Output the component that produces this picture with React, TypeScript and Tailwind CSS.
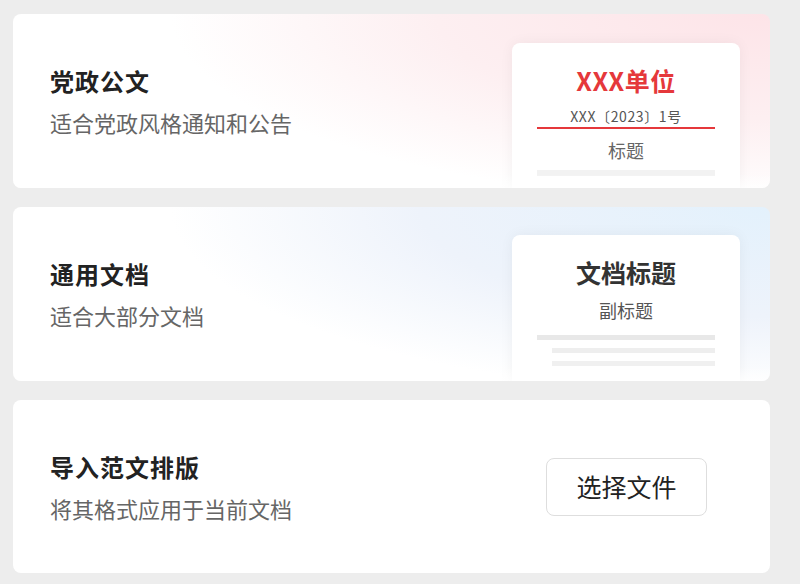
const font = { fontFamily: '"Noto Sans CJK SC", "Noto Sans", sans-serif' };

const Info = ({ title, desc }: { title: string; desc: string }) => (
  <div className="flex flex-col pl-[37px]">
    <p className="text-[24px] leading-[32px] font-bold tracking-[1px] text-[#222]">{title}</p>
    <p className="mt-[10px] text-[22px] leading-[30px] text-[#666]">{desc}</p>
  </div>
);

const App = () => {
  return (
    <div className="min-h-[584px] bg-[#ededed] pt-[14px] pl-[13px] pr-[30px]" style={font}>
      <div className="flex flex-col gap-[19px]">
        {/* 党政公文 */}
        <div className="relative h-[174px] overflow-hidden rounded-[8px] bg-[radial-gradient(110%_150%_at_100%_0%,#fde4e8_0%,#fdeff1_40%,#ffffff_72%)] flex items-center justify-between">
          <Info title="党政公文" desc="适合党政风格通知和公告" />
          <div className="self-start mt-[29px] mr-[30px] w-[228px] h-[170px] rounded-[8px] bg-white shadow-[0_0_14px_rgba(0,0,0,0.05)] flex flex-col items-center pt-[21px]">
            <p className="text-[25px] leading-[32px] font-bold tracking-[0.5px] text-[#e5383b]">XXX单位</p>
            <p className="mt-[11px] text-[14px] leading-[18px] tracking-[0.6px] text-[#555]">XXX〔2023〕1号</p>
            <div className="mt-[2px] h-[2px] w-[178px] bg-[#e5383b]" />
            <p className="mt-[10px] text-[18px] leading-[22px] text-[#666]">标题</p>
            <div className="mt-[9px] h-[6px] w-[178px] bg-[#f2f2f2]" />
          </div>
          <div className="absolute inset-x-0 bottom-0 h-[14px] bg-gradient-to-b from-transparent to-white/70" />
        </div>

        {/* 通用文档 */}
        <div className="relative h-[174px] overflow-hidden rounded-[8px] bg-[radial-gradient(110%_150%_at_100%_0%,#e3f1fc_0%,#eef3fb_42%,#ffffff_72%)] flex items-center justify-between">
          <Info title="通用文档" desc="适合大部分文档" />
          <div className="self-start mt-[28px] mr-[30px] w-[228px] h-[170px] rounded-[8px] bg-white shadow-[0_0_14px_rgba(0,0,0,0.05)] flex flex-col items-center pt-[21px]">
            <p className="text-[25px] leading-[32px] font-bold text-[#333]">文档标题</p>
            <p className="mt-[10px] text-[18px] leading-[24px] text-[#555]">副标题</p>
            <div className="mt-[13px] flex w-[178px] flex-col items-end">
              <div className="h-[5px] w-full bg-[#e8e8e8]" />
              <div className="mt-[8px] h-[5px] w-[163px] bg-[#eeeeee]" />
              <div className="mt-[8px] h-[5px] w-[163px] bg-[#f0f0f0]" />
            </div>
          </div>
          <div className="absolute inset-x-0 bottom-0 h-[14px] bg-gradient-to-b from-transparent to-white/70" />
        </div>

        {/* 导入范文排版 */}
        <div className="h-[173px] rounded-[8px] bg-white flex items-center justify-between">
          <Info title="导入范文排版" desc="将其格式应用于当前文档" />
          <button className="mr-[63px] h-[58px] w-[161px] rounded-[8px] border border-[#dedede] bg-white text-[25px] text-[#222]">
            选择文件
          </button>
        </div>
      </div>
    </div>
  );
};

export default App;
